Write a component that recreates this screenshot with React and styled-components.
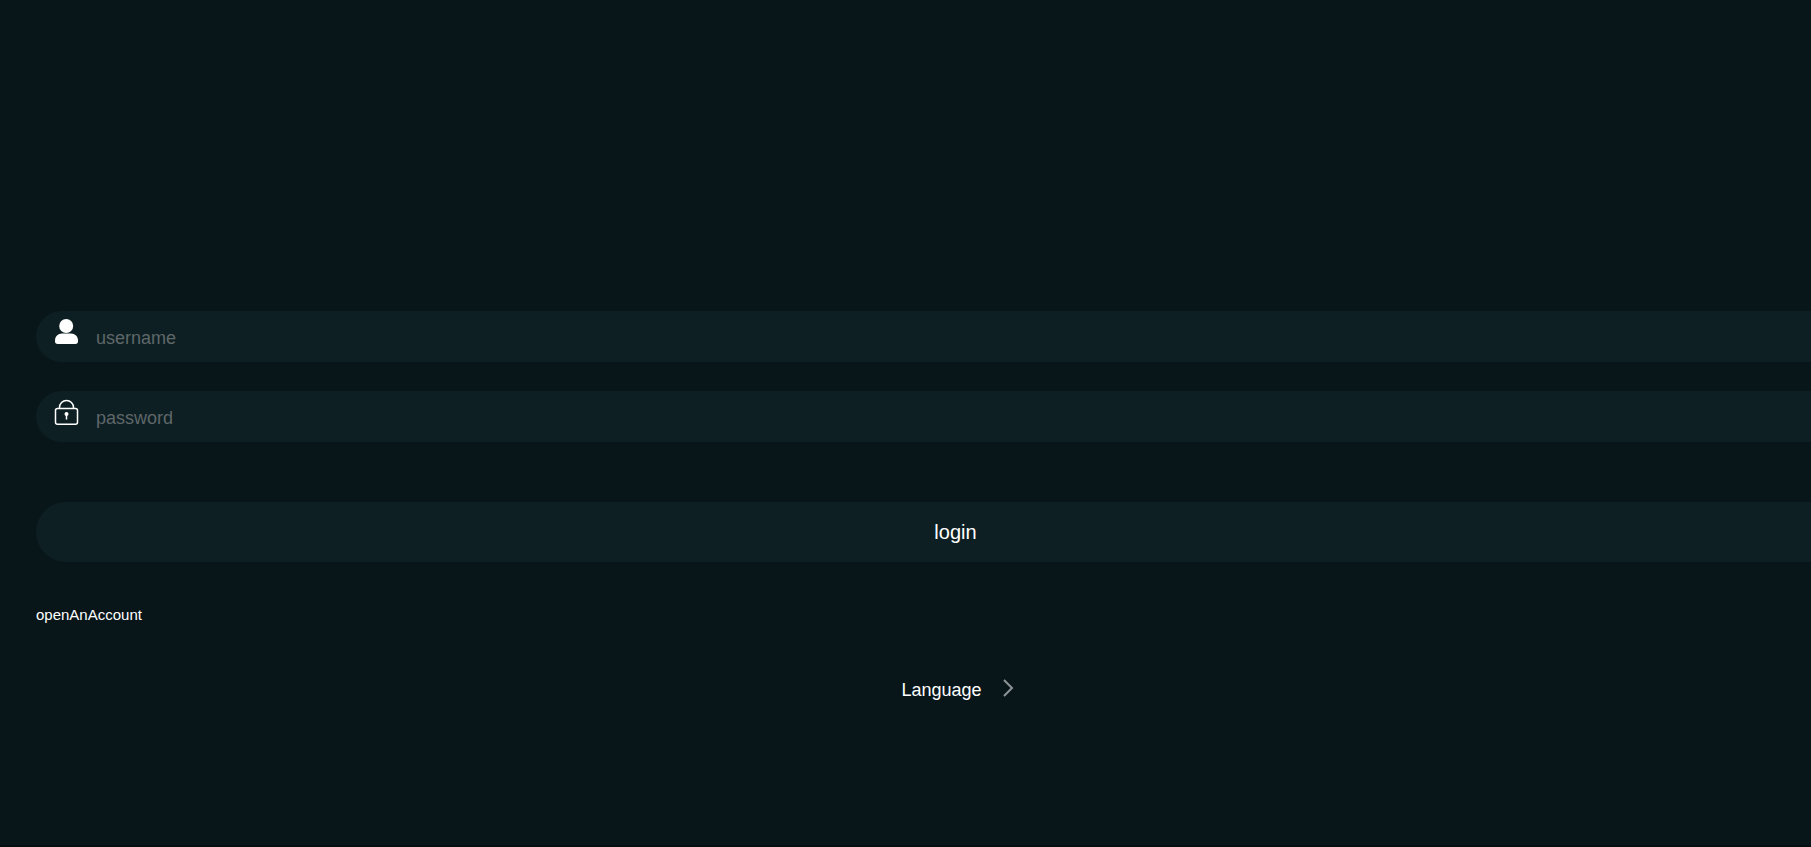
import { useState } from "react";
import styled, { createGlobalStyle } from "styled-components";

const GlobalStyle = createGlobalStyle`
  * {
    box-sizing: border-box;
  }

  body {
    margin: 0;
    background-color: #08161a;
    font-family: "Liberation Sans", Arial, sans-serif;
    color: #fff;
  }
`;

const Page = styled.main`
  min-height: 100vh;
  padding: 311px 0 40px 36px;
  border-bottom: 2px solid #040f12;
  overflow: hidden;
`;

// The form runs past the right edge of the window
const Form = styled.form`
  display: flex;
  flex-direction: column;
  width: calc(100% + 64px);
`;

const Field = styled.label`
  display: flex;
  align-items: flex-start;
  gap: 17px;
  height: 51px;
  margin-bottom: 29px;
  padding: 8px 18px 0;
  border-radius: 26px;
  background-color: #0d1f23;

  svg {
    flex: none;
  }
`;

const Input = styled.input`
  flex: 1;
  height: 39px;
  padding: 0;
  border: none;
  outline: none;
  background: transparent;
  color: #fff;
  font-family: inherit;
  font-size: 18px;

  &::placeholder {
    color: #5f6769;
    opacity: 1;
  }
`;

const LoginButton = styled.button`
  height: 60px;
  margin-top: 31px;
  border: none;
  border-radius: 30px;
  background-color: #0d1f23;
  color: #fff;
  font-family: inherit;
  font-size: 20px;
  cursor: pointer;
`;

const AccountLink = styled.a`
  align-self: flex-start;
  margin-top: 43px;
  color: #fff;
  font-size: 15px;
  line-height: 20px;
  text-decoration: none;
`;

const LanguageButton = styled.button`
  display: flex;
  align-items: flex-start;
  align-self: center;
  gap: 20px;
  margin-top: 54px;
  padding: 0 0 0 4px;
  border: none;
  background: none;
  color: #fff;
  font-family: inherit;
  font-size: 18px;
  line-height: 22px;
  cursor: pointer;
`;

function UserIcon() {
  return (
    <svg width="25" height="26" viewBox="0 0 25 26" fill="#fff" aria-hidden="true">
      <circle cx="12.2" cy="7" r="7" />
      <path d="M8 14.5h9c4 0 7 3 7 7v1c0 1.5-1 2.5-2.5 2.5h-18C2 25 1 24 1 22.5v-1c0-4 3-7 7-7z" />
    </svg>
  );
}

function LockIcon() {
  return (
    <svg width="25" height="26" viewBox="0 0 25 26" fill="none" stroke="#fff" strokeWidth="1.5" aria-hidden="true">
      <rect x="1.5" y="9.5" width="22" height="15.7" rx="2" />
      <path d="M5.5 9.5V8.500a7 7 0 0 1 14 0v1" />
      <circle cx="12.5" cy="15" r="2" fill="#fff" stroke="none" />
      <path d="M12.5 15v5.500" />
    </svg>
  );
}

function ArrowIcon() {
  return (
    <svg width="12" height="18" viewBox="0 0 12 18" fill="none" stroke="#8c9496" strokeWidth="2" aria-hidden="true">
      <path d="M2 1l8 8-8 8" />
    </svg>
  );
}

function App() {
  const [username, setUsername] = useState("");
  const [password, setPassword] = useState("");

  return (
    <>
      <GlobalStyle />
      <Page>
        <Form onSubmit={(e) => e.preventDefault()}>
          <Field>
            <UserIcon />
            <Input
              type="text"
              placeholder="username"
              aria-label="username"
              value={username}
              onChange={(e) => setUsername(e.target.value)}
            />
          </Field>
          <Field>
            <LockIcon />
            <Input
              type="password"
              placeholder="password"
              aria-label="password"
              value={password}
              onChange={(e) => setPassword(e.target.value)}
            />
          </Field>
          <LoginButton type="submit">login</LoginButton>
          <AccountLink href="#register">openAnAccount</AccountLink>
          <LanguageButton type="button">
            Language
            <ArrowIcon />
          </LanguageButton>
        </Form>
      </Page>
    </>
  );
}

export default App;
